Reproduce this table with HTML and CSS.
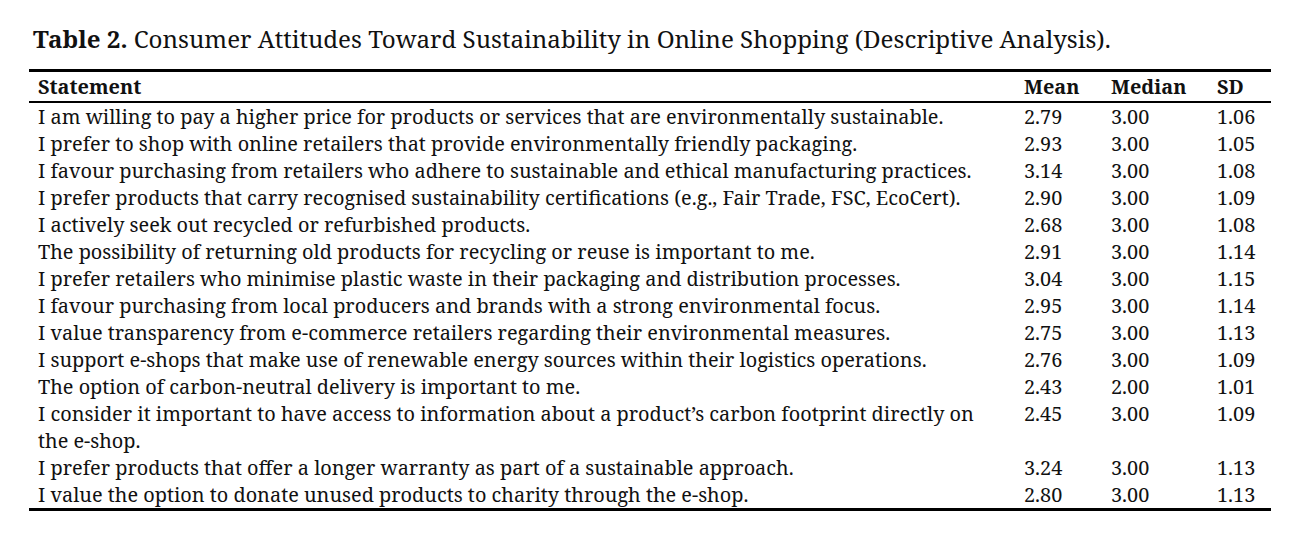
FILE: index.html
```html
<!DOCTYPE html>
<html lang="en">
<head>
<meta charset="utf-8">
<link rel="stylesheet" href="styles.css">
</head>
<body>
<div class="page">
  <p class="caption"><b>Table 2.</b> Consumer Attitudes Toward Sustainability in Online Shopping (Descriptive Analysis).</p>
  <table class="data">
    <colgroup>
      <col class="c-stmt"><col class="c-mean"><col class="c-med"><col class="c-sd">
    </colgroup>
    <thead>
      <tr><th>Statement</th><th>Mean</th><th>Median</th><th>SD</th></tr>
    </thead>
    <tbody>
      <tr><td>I am willing to pay a higher price for products or services that are environmentally sustainable.</td><td>2.79</td><td>3.00</td><td>1.06</td></tr>
      <tr><td>I prefer to shop with online retailers that provide environmentally friendly packaging.</td><td>2.93</td><td>3.00</td><td>1.05</td></tr>
      <tr><td>I favour purchasing from retailers who adhere to sustainable and ethical manufacturing practices.</td><td>3.14</td><td>3.00</td><td>1.08</td></tr>
      <tr><td>I prefer products that carry recognised sustainability certifications (e.g., Fair Trade, FSC, EcoCert).</td><td>2.90</td><td>3.00</td><td>1.09</td></tr>
      <tr><td>I actively seek out recycled or refurbished products.</td><td>2.68</td><td>3.00</td><td>1.08</td></tr>
      <tr><td>The possibility of returning old products for recycling or reuse is important to me.</td><td>2.91</td><td>3.00</td><td>1.14</td></tr>
      <tr><td>I prefer retailers who minimise plastic waste in their packaging and distribution processes.</td><td>3.04</td><td>3.00</td><td>1.15</td></tr>
      <tr><td>I favour purchasing from local producers and brands with a strong environmental focus.</td><td>2.95</td><td>3.00</td><td>1.14</td></tr>
      <tr><td>I value transparency from e-commerce retailers regarding their environmental measures.</td><td>2.75</td><td>3.00</td><td>1.13</td></tr>
      <tr><td>I support e-shops that make use of renewable energy sources within their logistics operations.</td><td>2.76</td><td>3.00</td><td>1.09</td></tr>
      <tr><td>The option of carbon-neutral delivery is important to me.</td><td>2.43</td><td>2.00</td><td>1.01</td></tr>
      <tr><td>I consider it important to have access to information about a product’s carbon footprint directly on the e-shop.</td><td>2.45</td><td>3.00</td><td>1.09</td></tr>
      <tr><td>I prefer products that offer a longer warranty as part of a sustainable approach.</td><td>3.24</td><td>3.00</td><td>1.13</td></tr>
      <tr><td>I value the option to donate unused products to charity through the e-shop.</td><td>2.80</td><td>3.00</td><td>1.13</td></tr>
    </tbody>
  </table>
</div>
</body>
</html>
```
FILE: styles.css
```css
html, body {
  margin: 0;
  padding: 0;
  background: #ffffff;
}

.page {
  padding: 23px 0 0 29px;
  font-family: "Noto Serif", "DejaVu Serif Condensed", "DejaVu Serif", serif;
  color: #111111;
}

.caption {
  margin: 0 0 14px 4px;
  font-size: 24.15px;
  line-height: 32px;
  white-space: nowrap;
}

.caption b {
  font-weight: bold;
}

.data {
  width: 1242px;
  border-collapse: collapse;
  table-layout: fixed;
  font-size: 19.9px;
  line-height: 27px;
  border-top: 3px solid #000;
  border-bottom: 3px solid #000;
}

.data th, .data td {
  box-sizing: border-box;
  padding: 0 0 0 9px;
  text-align: left;
  vertical-align: top;
}

.data th {
  font-weight: bold;
  line-height: 28px;
  padding-top: 1px;
  border-bottom: 2px solid #000;
}

.c-stmt { width: 986px; }
.c-mean { width: 87px; }
.c-med { width: 106px; }
.c-sd { width: 63px; }

.data td:first-child {
  padding-right: 20px;
}
```
